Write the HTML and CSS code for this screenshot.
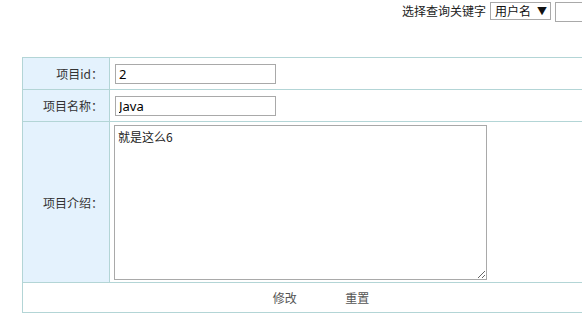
FILE: index.html
```html
<!DOCTYPE html>
<html lang="zh-CN">

<head>
    <meta charset="UTF-8">
    <title>修改项目</title>
    <link rel="stylesheet" href="styles.css">
</head>

<body>
    <div class="search">
        <span class="search-label">选择查询关键字</span>
        <span class="select">用户名 <i>▼</i></span>
        <span class="search-input"></span>
    </div>

    <table class="form">
        <tr class="row">
            <td class="label">项目id：</td>
            <td><input class="text" type="text" value="2"></td>
        </tr>
        <tr class="row">
            <td class="label">项目名称：</td>
            <td><input class="text" type="text" value="Java"></td>
        </tr>
        <tr class="row-big">
            <td class="label">项目介绍：</td>
            <td><textarea class="area">就是这么6</textarea></td>
        </tr>
        <tr class="row-btn">
            <td colspan="2">
                <button class="btn">修改</button>
                <button class="btn">重置</button>
            </td>
        </tr>
    </table>
</body>

</html>
```

FILE: styles.css
```css
* {
    box-sizing: border-box;
}

html,
body {
    overflow: hidden;
}

body {
    margin: 0;
    width: 582px;
    font-family: "Noto Sans CJK SC", "Noto Sans", sans-serif;
    font-size: 12px;
    color: #333;
}

.search {
    display: flex;
    align-items: center;
    justify-content: flex-end;
    height: 20px;
    padding-top: 1px;
    margin-right: -53px;
    white-space: nowrap;
}

.search-label {
    color: #222;
    margin-right: 4px;
}

.select {
    display: inline-flex;
    align-items: center;
    height: 18px;
    width: 61px;
    border: 1px solid #a9a9a9;
    padding: 0 4px;
    color: #111;
    font-size: 12px;
}

.select i {
    font-style: normal;
    font-size: 10px;
    margin-left: 6px;
}

.search-input {
    display: inline-block;
    width: 80px;
    height: 20px;
    border: 1px solid #a9a9a9;
    margin-left: 4px;
    margin-top: 2px;
}

.form {
    margin: 37px 0 0 22px;
    width: 598px;
    border-collapse: collapse;
    border: 1px solid #b3d5d6;
}

.form td {
    border: 1px solid #b3d5d6;
    padding: 0 0 0 5px;
}

.form .label {
    width: 87px;
    background: #e4f2fd;
    text-align: right;
    padding: 0 6px 0 0;
    color: #333;
}

.row td {
    height: 32px;
}

.row-big td {
    height: 161px;
}

.row-btn td {
    height: 30px;
    text-align: center;
    padding: 0;
}

.text {
    display: block;
    width: 161px;
    height: 20px;
    border: 1px solid #a9a9a9;
    padding: 0 3px;
    font-family: "Noto Sans", "Noto Sans CJK SC", sans-serif;
    font-size: 13px;
    color: #000;
}

.area {
    display: block;
    width: 373px;
    height: 155px;
    border: 1px solid #a9a9a9;
    padding: 2px 3px;
    margin-left: -1px;
    font-family: "Noto Sans CJK SC", "Noto Sans", sans-serif;
    font-size: 12px;
    color: #222;
    resize: both;
}

.btn {
    background: none;
    border: none;
    padding: 0;
    font-family: "Noto Sans CJK SC", sans-serif;
    font-size: 12px;
    color: #555;
    margin: 0 23px;
    cursor: pointer;
}
```
